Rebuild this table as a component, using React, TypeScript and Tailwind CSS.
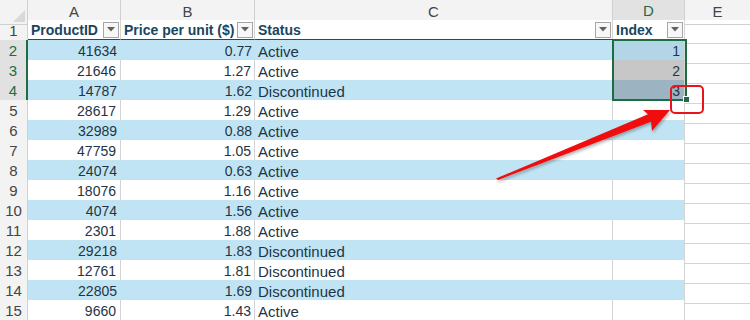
import React from "react";

const rows: [number, string, string][] = [
    [41634, "0.77", "Active"],
    [21646, "1.27", "Active"],
    [14787, "1.62", "Discontinued"],
    [28617, "1.29", "Active"],
    [32989, "0.88", "Active"],
    [47759, "1.05", "Active"],
    [24074, "0.63", "Active"],
    [18076, "1.16", "Active"],
    [4074, "1.56", "Active"],
    [2301, "1.88", "Active"],
    [29218, "1.83", "Discontinued"],
    [12761, "1.81", "Discontinued"],
    [22805, "1.69", "Discontinued"],
    [9660, "1.43", "Active"],
]

const gridCols = "grid grid-cols-[28px_93px_134px_358px_72px_65px]"

const FilterButton = () => (
    <div className="w-[16px] h-[16px] border border-[#a6a6a6] bg-[#f7f7f7] flex items-center justify-center shrink-0">
        <svg width="8" height="5" viewBox="0 0 8 5"><path d="M0 0 L8 0 L4 4.5 Z" fill="#606060" /></svg>
    </div>
)

const HeaderCell = ({ label }: { label: string }) => (
    <div className="h-[20px] flex items-center justify-between pl-[3px] pr-[1px] border-b border-b-[#1d4d6a] bg-white border-r border-r-[#d4d4d4]">
        <span className="font-bold text-[#1a4560] leading-none">{label}</span>
        <FilterButton />
    </div>
)

export default function App() {
    const indexFill = ["bg-[#b3d6e6]", "bg-[#c7c7c7]", "bg-[#9cb3c2]"]
    return (
        <div className="relative w-[750px] h-[320px] overflow-hidden bg-white text-[14px] text-[#1f3545]" style={{ fontFamily: '"Liberation Sans", Arial, sans-serif' }}>
            {/* COLUMN LETTERS */}
            <div className={gridCols + " h-[20px] bg-[#f3f3f3] text-[#444] text-[15px]"}>
                <div className="relative border-r border-b border-[#d0d0d0]">
                    <svg className="absolute right-[2px] bottom-[2px]" width="12" height="12" viewBox="0 0 12 12"><path d="M12 0 L12 12 L0 12 Z" fill="#d9d9d9" /></svg>
                </div>
                {["A", "B", "C"].map(l => (
                    <div key={l} className="flex items-center justify-center border-r border-b border-[#d0d0d0]">{l}</div>
                ))}
                <div className="flex items-center justify-center bg-[#e2e2e2] border-r border-[#d0d0d0] border-b-2 border-b-[#1f6b42] text-[#1f6b42]">D</div>
                <div className="flex items-center justify-center border-b border-[#d0d0d0]">E</div>
            </div>
            {/* TABLE HEADER ROW */}
            <div className={gridCols + " h-[20px]"}>
                <div className="flex items-center justify-center bg-[#f3f3f3] text-[#444] text-[15px] border-r border-b border-[#d0d0d0]">1</div>
                <HeaderCell label="ProductID" />
                <HeaderCell label="Price per unit ($)" />
                <HeaderCell label="Status" />
                <HeaderCell label="Index" />
                <div className="border-b border-[#d4d4d4]" />
            </div>
            {/* DATA ROWS */}
            {rows.map((r, i) => {
                const blue = i % 2 === 0
                const selected = i < 3
                const bg = blue ? "bg-[#c0e4f4]" : "bg-white"
                const line = blue ? "" : "border-r border-[#d4d4d4]"
                return (
                    <div key={i} className={gridCols + " h-[20px]"}>
                        <div className={"flex items-center justify-center text-[15px] border-b border-[#d0d0d0] " + (selected ? "bg-[#e1e1e1] text-[#1f6b42] border-r-2 border-r-[#1f6b42]" : "bg-[#f3f3f3] text-[#444] border-r")}>{i + 2}</div>
                        <div className={"flex items-center justify-end pr-[4px] " + bg + " " + line}>{r[0]}</div>
                        <div className={"flex items-center justify-end pr-[3px] " + bg + " " + line}>{r[1]}</div>
                        <div className={"flex items-center pl-[3px] text-[15px] " + bg + " " + line}>{r[2]}</div>
                        <div className={"flex items-center justify-end pr-[4px] " + (selected ? indexFill[i] : bg) + " border-r border-[#d4d4d4]"}>{selected ? i + 1 : ""}</div>
                        <div className="border-b border-[#d4d4d4]" />
                    </div>
                )
            })}
            {/* SELECTION BORDER + FILL HANDLE */}
            <div className="absolute left-[612px] top-[39px] w-[75px] h-[62px] border-2 border-[#1f6b42]" />
            <div className="absolute left-[683px] top-[96px] w-[7px] h-[7px] bg-[#1f6b42] border border-white" />
            {/* CALLOUT BOX */}
            <div className="absolute left-[670px] top-[85px] w-[34px] h-[29px] rounded-[5px] border-2 border-[#e8141c]" />
            {/* ARROW */}
            <svg className="absolute left-0 top-0" width="750" height="320" viewBox="0 0 750 320">
                <defs>
                    <filter id="sh" x="-20%" y="-20%" width="140%" height="140%">
                        <feDropShadow dx="1" dy="2" stdDeviation="1.5" floodColor="#000" floodOpacity="0.3" />
                    </filter>
                </defs>
                <path d="M496 178.5 L648 114.3 L643 110 L670 110 L652 131 L651 121.7 L498 180 Z" fill="#f01010" filter="url(#sh)" />
            </svg>
        </div>
    )
}
